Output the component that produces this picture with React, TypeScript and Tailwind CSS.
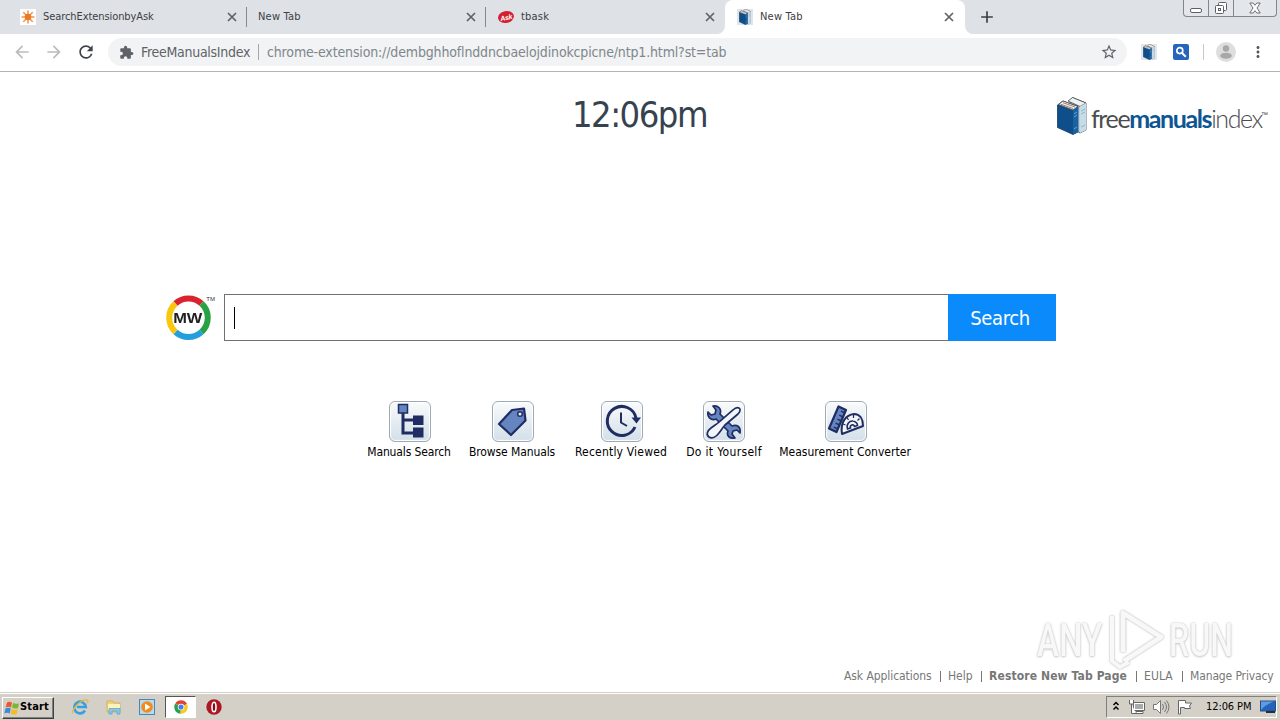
import type { ReactNode } from 'react';
import { MdArrowBack, MdArrowForward, MdRefresh, MdExtension, MdStarBorder, MdAdd, MdMoreVert } from 'react-icons/md';

function BookIcon({ className }: { className?: string }) {
  return (
    <svg viewBox="0 0 30 38" preserveAspectRatio="none" className={`shrink-0 ${className}`}>
      <path d="M13 4 L15.500 0.500 L29 6 V33 L23 36 L13 30Z" fill="#b5cfdf" stroke="#3b4b58" strokeWidth="0.8" />
      <path d="M11 4 L15.500 0.500 L29 6 L23 9.500Z" fill="#f1f1ee" stroke="#3b4b58" strokeWidth="0.8" />
      <path d="M23 9.500 L29 6 V33 L23 36Z" fill="#c8dce8" />
      <path d="M24 14l4-2M24 17l4-2M24 30l4-2" stroke="#7fa7c2" strokeWidth="0.8" />
      <path d="M0.500 8 L6 4 L21 9.500 V35 L16 37.500 L0.500 30.500Z" fill="#0e4f8b" stroke="#183a5c" strokeWidth="0.8" />
      <path d="M1.500 7.500 L6 4 L21 9.500 L16 13Z" fill="#f3f1ea" stroke="#4c4c4c" strokeWidth="0.8" />
      <path d="M16 13 L21 9.500 V35 L16 37.500Z" fill="#17629f" />
      <path d="M17 17l3-2M17 20l3-2M17 32l3-2" stroke="#83b3d7" strokeWidth="0.8" />
      <path d="M4 7.300l12 4.200M6 5.700l12 4.300" stroke="#8b6254" strokeWidth="0.8" />
    </svg>
  );
}

function StarburstIcon() {
  return (
    <svg viewBox="0 0 16 16" className="size-4 bg-white">
      <path d="M8 1.500v13M1.500 8h13M3.300 3.300l9.400 9.400M12.700 3.300l-9.400 9.400" stroke="#f0924a" strokeWidth="1.500" />
      <circle cx="8" cy="8" r="3.300" fill="#ea7a24" />
    </svg>
  );
}

function AskIcon() {
  return (
    <span className="flex h-[12px] w-4 -rotate-12 items-center justify-center rounded-[50%] bg-[#d4202f] font-['Liberation_Sans',sans-serif] text-[7px] font-bold italic leading-none tracking-[-0.3px] text-white">
      Ask
    </span>
  );
}

interface TabProps {
  title: string;
  icon?: ReactNode;
  active?: boolean;
  divider?: boolean;
}

function Tab({ title, icon, active, divider }: TabProps) {
  return (
    <div
      className={`relative flex h-[34px] items-center pl-3 ${
        active ? 'w-[240px] rounded-t-lg bg-white pr-[9px]' : 'w-[239px] pr-2'
      }`}
    >
      {icon && <span className="mr-[7px] flex w-4 shrink-0">{icon}</span>}
      <span
        className={`flex-1 whitespace-nowrap text-[11px] ${
          title === 'SearchExtensionbyAsk' ? 'tracking-[-0.08px]' : 'tracking-[0.2px]'
        } ${icon ? '' : '-ml-px'} text-[#3c4043]`}
      >
        {title}
      </span>
      <svg viewBox="0 0 14 14" className="size-[14px]" stroke="#5f6368" strokeWidth="1.700">
        <path d="M3 3l8 8M11 3l-8 8" />
      </svg>
      {divider && <span className="absolute right-0 top-[7px] h-5 w-px bg-[#85898e]" />}
      {active && (
        <>
          <svg viewBox="0 0 8 8" className="absolute -left-2 bottom-0 size-2">
            <path d="M8 0v8H0a8 8 0 0 0 8-8z" fill="#fff" />
          </svg>
          <svg viewBox="0 0 8 8" className="absolute -right-2 bottom-0 size-2">
            <path d="M0 0v8h8a8 8 0 0 1-8-8z" fill="#fff" />
          </svg>
        </>
      )}
    </div>
  );
}

function WindowControls() {
  return (
    <div className="mr-[3px] ml-auto flex h-[17px] w-[94px] rounded-b-[4px] border border-t-0 border-[#83878d] bg-[#e3e6eb]">
      <div className="flex w-[25px] items-end justify-center border-r border-[#83878d] pb-[3px]">
        <span className="h-[5px] w-3 rounded-[2px] border border-[#5d6167] bg-white" />
      </div>
      <div className="flex w-[25px] items-center justify-center border-r border-[#83878d]">
        <svg viewBox="0 0 14 14" className="size-[14px]" fill="#fff" stroke="#5d6167">
          <rect x="4.500" y="1.500" width="8" height="8" rx="1" />
          <rect x="1.500" y="4.500" width="8" height="8" rx="1" />
          <rect x="4.500" y="7.500" width="2" height="2" />
        </svg>
      </div>
      <div className="flex flex-1 items-center justify-center">
        <svg viewBox="0 0 12 12" className="size-3" fill="#fff" stroke="#5d6167" strokeWidth="0.9">
          <path d="M.8 1h3.400L6 3.300 7.800 1h3.400L8 6l3.200 5H7.800L6 8.700 4.200 11H.8L4 6z" />
        </svg>
      </div>
    </div>
  );
}

function Toolbar() {
  return (
    <div className="flex h-[38px] items-center border-b border-[#b4b4b4] bg-white pb-px">
      <MdArrowBack className="ml-3 size-5 text-[#babcbe]" />
      <MdArrowForward className="ml-3 size-5 text-[#babcbe]" />
      <MdRefresh className="ml-3 size-5 text-[#3f4347]" />
      <div className="ml-3 flex h-7 w-[1019px] items-center rounded-full bg-[#f1f3f4] text-[14px]">
        <MdExtension className="ml-[11px] size-[15px] text-[#5f6368]" />
        <span className="ml-[7px] w-[117px] whitespace-nowrap tracking-[-0.28px] text-[#5f6368]">FreeManualsIndex</span>
        <span className="h-4 w-px bg-[#a5a8ab]" />
        <span className="ml-2 flex-1 whitespace-nowrap tracking-[-0.15px] text-[#80868b]">
          chrome-extension://dembghhoflnddncbaelojdinokcpicne/ntp1.html?st=tab
        </span>
        <MdStarBorder className="mr-[9px] size-[18px] text-[#5f6368]" />
      </div>
      <span className="ml-[14px] flex size-4 justify-center bg-[#e3e7ea]">
        <BookIcon className="h-4 w-[12px]" />
      </span>
      <svg viewBox="0 0 16 16" className="ml-4 size-4">
        <rect width="16" height="16" rx="2" fill="#2565bb" />
        <circle cx="6.800" cy="6.600" r="3" fill="none" stroke="#fff" strokeWidth="1.700" />
        <path d="M9 9l3.800 3.800" stroke="#fff" strokeWidth="2" />
      </svg>
      <span className="ml-[14px] h-4 w-px bg-[#c6c9cc]" />
      <svg viewBox="0 0 20 20" className="ml-3 size-5">
        <circle cx="10" cy="10" r="10" fill="#dedede" />
        <circle cx="10" cy="6.500" r="3.200" fill="#a8a8a8" />
        <ellipse cx="10" cy="13.700" rx="5.800" ry="3" fill="#a8a8a8" />
      </svg>
      <MdMoreVert className="ml-[13px] size-[18px] text-[#55595d]" />
    </div>
  );
}

function MyWayLogo() {
  return (
    <div className="relative mt-px flex size-[46px] items-center justify-center">
      <svg viewBox="0 0 46 46" className="absolute inset-0 size-full" fill="none" strokeWidth="6">
        <path d="M10.500 8.500A19.300 19.300 0 0 1 36.500 8.500" stroke="#d9232e" />
        <path d="M36.500 8.500A19.300 19.300 0 0 1 36.500 37" stroke="#27a343" />
        <path d="M36.500 37A19.300 19.300 0 0 1 10.500 37" stroke="#259fdc" />
        <path d="M10.500 37A19.300 19.300 0 0 1 10.500 8.500" stroke="#f9c80e" />
      </svg>
      <span className="relative scale-x-[1.06] font-['Liberation_Sans',sans-serif] text-[15.500px] font-bold leading-none text-[#222]">
        MW
      </span>
      <span className="absolute -right-[4px] top-px font-['Liberation_Sans',sans-serif] text-[6px] leading-none text-[#333]">TM</span>
    </div>
  );
}

const ink = '#202d63';
const steel = '#6485bf';

const shortcuts: { label: string; cell: string; icon: ReactNode }[] = [
  {
    label: 'Manuals Search',
    cell: 'w-[84px] tracking-[-0.13px]',
    icon: (
      <>
        <path d="M14 11v21h12M14 19h12" fill="none" stroke={ink} strokeWidth="3" />
        <rect x="9.500" y="3.500" width="9" height="8.500" fill={steel} stroke={ink} strokeWidth="1.500" />
        <rect x="24" y="14.500" width="10.500" height="9.500" fill={ink} />
        <rect x="24" y="26.500" width="10.500" height="10" fill={ink} />
      </>
    ),
  },
  {
    label: 'Browse Manuals',
    cell: 'ml-[18px] w-[86px] tracking-[-0.1px]',
    icon: (
      <>
        <path d="M7 23L20 9l12-1.500 1.500 12L19 34z" fill={steel} stroke={ink} strokeWidth="2.200" strokeLinejoin="round" />
        <circle cx="28" cy="13" r="2.300" fill="#e6edf4" stroke={ink} strokeWidth="1.500" />
      </>
    ),
  },
  {
    label: 'Recently Viewed',
    cell: 'ml-5 w-[92px] tracking-[0.2px]',
    icon: (
      <>
        <path d="M34 26A14.500 14.500 0 1 1 35 17" fill="none" stroke={ink} strokeWidth="3" />
        <path d="M30.500 16.500h9.500l-4.500 6z" fill={ink} />
        <path d="M20 11.500v10l6 3.500" fill="none" stroke={ink} strokeWidth="2" />
      </>
    ),
  },
  {
    label: 'Do it Yourself',
    cell: 'ml-[19px] w-[76px] tracking-[0.34px]',
    icon: (
      <>
        <path
          d="M10 5l3 4-1 4-4 1-3-3c-1 5 3 9 8 7l12 12c-2 5 2 8 7 7l-3-4 1-3 4-1 3 3c1-6-3-9-8-7L17 13c2-5-2-9-7-8z"
          fill={steel}
          stroke={ink}
          strokeWidth="1.700"
          strokeLinejoin="round"
        />
        <path
          d="M36 7c2 1 1 4-1 6L22 24c-2 2-3 4-6 8-3 4-7 6-10 4s-2-6 2-9c4-3 6-4 8-6L30 9c2-2 4-3 6-2z"
          fill="#f3f6f9"
          stroke={ink}
          strokeWidth="1.700"
        />
      </>
    ),
  },
  {
    label: 'Measurement Converter',
    cell: 'ml-[17px] w-[132px] tracking-[0.02px]',
    icon: (
      <>
        <path d="M17 33c-2-12 4-19 12-20 6 0 9 5 9 12z" fill="#f3f6f9" stroke={ink} strokeWidth="2" strokeLinejoin="round" />
        <path d="M22.500 28c-1.500-5 2-8.500 5.500-8 3 .3 4.500 3 4.500 4.500l-3 1c-1-3-5-1.500-4 1.500z" fill="#f3f6f9" stroke={ink} strokeWidth="1.600" />
        <path d="M18 23l2.500 1M22 16.500l1.500 2.300M28.500 14v3M34.500 17.500l-2 2" stroke={ink} strokeWidth="1.200" />
        <path d="M13.500 5.500l7.500 3.500-9.500 22L4 27.500z" fill={steel} stroke={ink} strokeWidth="2.200" strokeLinejoin="round" />
        <path d="M20 12l-4-1.800M18.200 16l-4-1.800M16.400 20l-4-1.800M14.600 24l-4-1.800M12.800 28l-4-1.800" stroke={ink} strokeWidth="1.400" />
      </>
    ),
  },
];

function AnyRunMark() {
  return (
    <div className="absolute right-[46px] top-[536px] flex h-[64px] w-[197px] items-center justify-between font-['Roboto',sans-serif] text-[46px] font-medium leading-none text-[#f8f8f8] [text-shadow:0_0_2px_#bbb,0_1px_3px_#ccc]">
      <span className="w-[66px] origin-left scale-x-[0.72]">ANY</span>
      <svg viewBox="0 0 60 64" className="h-16 w-[60px] drop-shadow-[0_0_1px_#aaa]" fill="none" stroke="#f8f8f8" strokeWidth="5" strokeLinejoin="round">
        <path d="M17 44V5L55 29 18 53" />
        <path d="M6 8v45l8 6 9-5" strokeWidth="4" />
      </svg>
      <span className="w-[65px] origin-left scale-x-[0.7]">RUN</span>
    </div>
  );
}

function NewTabPage() {
  return (
    <main className="relative h-[620px] bg-white">
      <header className="flex h-[222px] items-start">
        <div className="ml-[572px] mt-[22px] w-[140px] whitespace-nowrap text-[36px] leading-[42px] tracking-[-1.5px] text-[#37424f]">
          12:06pm
        </div>
        <div className="ml-auto mr-3 mt-[25px] flex h-[38px] w-[211px]">
          <BookIcon className="h-[38px] w-[30px]" />
          <div className="ml-[4px] w-[170px] whitespace-nowrap font-['Lato',sans-serif] text-[25px] leading-[43px] tracking-[-1.39px] text-[#4b4d50]">
            free<span className="font-bold text-[#0d5593]">manuals</span>
            <span className="font-light">index</span>
          </div>
          <span className="mt-[14px] font-['Liberation_Sans',sans-serif] text-[7px] leading-[8px] text-[#444]">™</span>
        </div>
      </header>

      <div className="flex h-[47px] pl-[165px]">
        <MyWayLogo />
        <div className="ml-[13px] flex w-[724px] items-center border border-r-0 border-[#707070] pl-[9px]">
          <span className="h-[22px] w-px bg-black" />
        </div>
        <button className="w-[108px] bg-[#0a8afb] pr-1 text-[20px] tracking-[-0.35px] text-white">Search</button>
      </div>

      <div className="mt-[60px] flex pl-[367px]">
        {shortcuts.map((item) => (
          <a key={item.label} className={`flex flex-col items-center text-[12px] text-black ${item.cell}`}>
            <span
              className={`flex h-[41px] w-[42px] rounded-[6px] border border-[#a0aab4] bg-linear-to-b from-[#f9fbfc] to-[#d3dfe8] shadow-[inset_0_0_1px_1px_#fff] ${
                item.label === 'Do it Yourself' ? '' : 'ml-px'
              }`}
            >
              <svg viewBox="0 0 42 41" className="-m-px h-[41px] w-[42px] shrink-0">{item.icon}</svg>
            </span>
            <span className="mt-px whitespace-nowrap leading-[18px]">{item.label}</span>
          </a>
        ))}
      </div>

      <AnyRunMark />

      <footer className="mt-[207px] flex h-4 items-center whitespace-nowrap pl-[844px] text-[12px] leading-4 text-[#777]">
        <span className="w-[96px] tracking-[-0.07px]">Ask Applications</span>
        <span className="h-[11px] w-px bg-[#777]" />
        <span className="ml-[7px] w-[33px]">Help</span>
        <span className="h-[11px] w-px bg-[#777]" />
        <span className="ml-[7px] w-[147px] font-bold tracking-[0.12px]">Restore New Tab Page</span>
        <span className="h-[11px] w-px bg-[#777]" />
        <span className="ml-[7px] w-[38px] tracking-[0.1px]">EULA</span>
        <span className="h-[11px] w-px bg-[#777]" />
        <span className="ml-[7px] tracking-[-0.13px]">Manage Privacy</span>
      </footer>
    </main>
  );
}

function Taskbar() {
  return (
    <div className="flex h-7 items-center border-t border-[#d4d0c8] bg-[#d4d0c8] pl-[2px] pr-[3px] shadow-[inset_0_1px_0_#fff]">
      <div className="mt-[2px] flex h-[22px] w-[52px] items-center border border-b-[#404040] border-l-white border-r-[#404040] border-t-white pl-px shadow-[inset_-1px_-1px_0_#808080]">
        <svg viewBox="0 0 16 16" className="size-4 shrink-0">
          <path d="M3 2.500q2-1.500 5 0L7 7.500Q4.500 6 1.700 7.500z" fill="#e65b2c" />
          <path d="M9 3q3 1.500 6 .3L14 8q-3 1.300-6-.2z" fill="#79b832" />
          <path d="M1.500 8.500q3-1.500 5.300 0L5.700 13.500Q3.500 12 .4 13.300z" fill="#358de3" />
          <path d="M7.800 9q3 1.500 6 .2L12.700 14q-3 1.300-6-.3z" fill="#f5bd20" />
        </svg>
        <span className="text-[11px] font-bold tracking-[0.15px] text-black">Start</span>
      </div>
      <svg viewBox="0 0 18 18" className="ml-[17px] mt-px size-[18px]" fill="none">
        <path d="M14 12.500A5.800 5.800 0 1 1 14.800 9H6" stroke="#36a1e2" strokeWidth="2.700" />
        <path d="M2 15.500C-1 13 10 1 16 2c1.300.3 1 2 .3 3.200" stroke="#e9b83a" strokeWidth="1.300" />
      </svg>
      <svg viewBox="0 0 18 18" className="ml-4 mt-px size-[18px]">
        <path d="M2 3h6l1 2h6v9H2z" fill="#efd277" stroke="#cda74d" strokeWidth="0.700" />
        <path d="M3 6h12v6H3z" fill="#fff2b6" />
        <path d="M4 16v-5.500h11V16h-3v-3H7v3z" fill="#8bc9e8" stroke="#549dc3" strokeWidth="0.700" />
      </svg>
      <svg viewBox="0 0 16 16" className="ml-4 mt-px size-4">
        <rect x=".5" y=".5" width="15" height="15" fill="#b9d9ef" stroke="#4687bd" />
        <circle cx="8" cy="8" r="5.800" fill="#f28a1c" />
        <path d="M6 4.500v7L11.500 8z" fill="#fff" />
      </svg>
      <div className="ml-[10px] mt-px flex h-[22px] w-[31px] items-center justify-center border border-b-white border-l-[#555] border-r-white border-t-[#555] bg-white">
        <svg viewBox="0 0 16 16" className="size-[14px]">
          <path d="M8 8L1.500 3.800A7.700 7.700 0 0 1 14.900 4.500z" fill="#df4333" />
          <path d="M8 8L7.500 15.700A7.700 7.700 0 0 1 1.400 4z" fill="#2da04b" />
          <path d="M8 8L14.900 4.500A7.700 7.700 0 0 1 7.500 15.700z" fill="#f7ca25" />
          <circle cx="8" cy="8" r="3.700" fill="#fff" />
          <circle cx="8" cy="8" r="2.900" fill="#4080e8" />
        </svg>
      </div>
      <svg viewBox="0 0 16 16" className="ml-[10px] mt-px size-4">
        <circle cx="8" cy="8" r="7.700" fill="#ad1721" />
        <ellipse cx="8" cy="8" rx="2" ry="4.800" fill="#80101a" stroke="#fff" strokeWidth="1.600" />
      </svg>

      <div className="ml-auto mt-px flex h-[22px] w-[171px] items-center border border-b-white border-l-[#808080] border-r-white border-t-[#808080] pl-[4px]">
        <svg viewBox="0 0 8 10" className="mb-0.5 size-[10px]" fill="none" stroke="#000" strokeWidth="1.500">
          <path d="M1.500 4L4 1.500 6.500 4M1.500 8.500L4 6l2.500 2.500" />
        </svg>
        <svg viewBox="0 0 18 16" className="ml-[7px] h-4 w-[18px]" stroke="#666" fill="#fff">
          <path d="M5.500 3.500h11v8h-11zM8 14.500h7v-2H8z" />
          <path d="M7 5h8v5H7z" fill="#aaa" stroke="none" />
          <path d="M1.500 1v4h4V1M3.500 5v9.500H8" />
        </svg>
        <svg viewBox="0 0 18 16" className="ml-[6px] h-4 w-[18px]" stroke="#777" fill="none">
          <path d="M1.500 5.500h3l4-4v13l-4-4h-3z" fill="#fff" />
          <path d="M10.500 5q2 3 0 6M12.500 3q4 5 0 10M14.500 1.500q5 6.500 0 13" />
        </svg>
        <svg viewBox="0 0 18 16" className="ml-[6px] h-4 w-[18px]" stroke="#666" fill="#fff">
          <path d="M2.500 15V1.500h7V4h6l-2 3 1 2.500h-6v-1h-4V15z" />
        </svg>
        <span className="ml-3 w-[52px] whitespace-nowrap text-[11px] tracking-[-0.1px] text-black">12:06 PM</span>
        <svg viewBox="0 0 16 14" className="ml-0.5 h-[14px] w-4 shrink-0">
          <rect x=".5" y="1" width="15" height="10" fill="#2563bd" stroke="#264f8a" />
          <path d="M1 1.500h13Q5 5 1 10z" fill="#5d9be2" />
          <path d="M6 11h9v2H6z" fill="#242e3c" />
        </svg>
      </div>
    </div>
  );
}

export default function App() {
  return (
    <div className="flex h-[720px] w-[1280px] flex-col overflow-hidden bg-white font-['DejaVu_Sans_Condensed','DejaVu_Sans',sans-serif]">
      <div className="flex h-[34px] items-start bg-[#dee1e6] pl-2">
        <Tab title="SearchExtensionbyAsk" icon={<StarburstIcon />} divider />
        <Tab title="New Tab" divider />
        <Tab title="tbask" icon={<AskIcon />} />
        <Tab
          title="New Tab"
          active
          icon={
            <span className="flex size-4 justify-center bg-[#e1e5e8]">
              <BookIcon className="h-4 w-[12px]" />
            </span>
          }
        />
        <MdAdd className="ml-[12px] mt-[7px] size-5 text-[#3c4043]" />
        <WindowControls />
      </div>
      <Toolbar />
      <NewTabPage />
      <Taskbar />
    </div>
  );
}
